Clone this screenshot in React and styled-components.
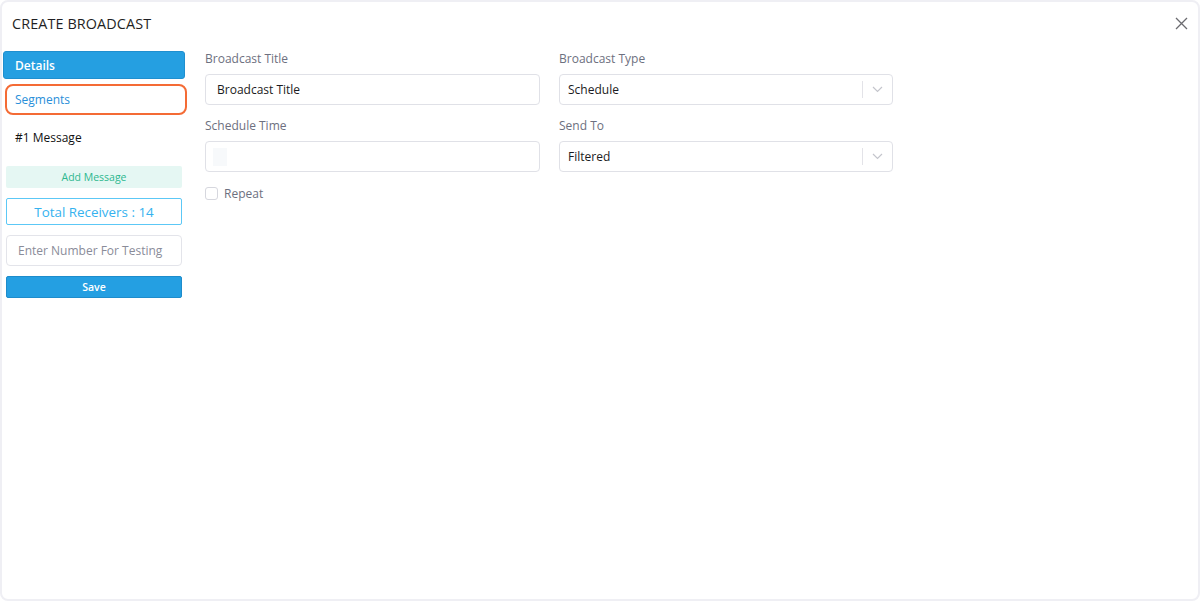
import React from "react";
import styled, { createGlobalStyle } from "styled-components";

const GlobalStyle = createGlobalStyle`
  html, body {
    margin: 0;
    padding: 0;
    background: #ffffff;
  }
  body {
    font-family: "Open Sans", "Noto Sans", sans-serif;
  }
  * {
    box-sizing: border-box;
  }
`;

const Card = styled.div`
  width: 1200px;
  height: 601px;
  border: 2px solid #efeff4;
  border-radius: 8px;
  background: #ffffff;
  display: flex;
  flex-direction: column;
`;

const Header = styled.div`
  display: flex;
  align-items: center;
  justify-content: space-between;
  height: 42px;
  padding: 0 7px 0 10px;
`;

const Title = styled.h1`
  margin: 0;
  font-family: "Open Sans", sans-serif;
  font-weight: 400;
  font-size: 14.4px;
  color: #1f1f24;
  letter-spacing: 0.1px;
`;

const CloseButton = styled.button`
  border: none;
  background: none;
  padding: 0;
  width: 20px;
  height: 20px;
  display: flex;
  align-items: center;
  justify-content: center;
  cursor: pointer;
`;

const Body = styled.div`
  display: flex;
  gap: 20px;
  padding: 7px 0 0 1px;
`;

const Sidebar = styled.div`
  width: 182px;
  display: flex;
  flex-direction: column;
`;

const NavItem = styled.div`
  height: ${(p) => (p.$outlined ? "31px" : "28px")};
  margin: ${(p) => (p.$outlined ? "5px -2px 0 2px" : "0")};
  display: flex;
  align-items: center;
  padding-left: ${(p) => (p.$outlined ? "8px" : "11px")};
  font-size: 12px;
  font-weight: ${(p) => (p.$active ? 600 : 400)};
  color: ${(p) => (p.$active ? "#ffffff" : p.$outlined ? "#2a8fd9" : "#111111")};
  background: ${(p) => (p.$active ? "#259fe1" : "transparent")};
  border: ${(p) => (p.$outlined ? "2px solid #f46b35" : p.$active ? "1px solid #1f8fcf" : "none")};
  border-radius: ${(p) => (p.$outlined ? "8px" : "3px")};
`;

const MessageItem = styled.div`
  height: 38px;
  display: flex;
  align-items: center;
  padding-left: 12px;
  margin-top: 3px;
  font-size: 12px;
  color: #111111;
`;

const Actions = styled.div`
  display: flex;
  flex-direction: column;
  gap: 10px;
  padding: 10px 3px 0 3px;
`;

const AddMessage = styled.button`
  height: 22px;
  border: none;
  border-radius: 2px;
  background: #e5f7f3;
  color: #2db88f;
  font-family: inherit;
  font-size: 10.5px;
  font-weight: 500;
  cursor: pointer;
`;

const Receivers = styled.div`
  height: 27px;
  border: 1px solid #5cc8f6;
  border-radius: 2px;
  display: flex;
  align-items: center;
  justify-content: center;
  color: #35b2ef;
  font-size: 13.4px;
`;

const TestInput = styled.input`
  height: 31px;
  border: 1px solid #e3e4ea;
  border-radius: 4px;
  padding: 0 11px;
  font-family: inherit;
  font-size: 12px;
  color: #333;
  outline: none;
  &::placeholder {
    color: #8a8c99;
  }
`;

const SaveButton = styled.button`
  height: 22px;
  border: 1px solid #1e8ccb;
  border-radius: 2px;
  background: #249fe2;
  color: #ffffff;
  font-family: inherit;
  font-size: 10.5px;
  font-weight: 600;
  cursor: pointer;
`;

const Form = styled.div`
  display: grid;
  grid-template-columns: 335px 334px;
  column-gap: 19px;
  align-content: start;
`;

const Field = styled.div`
  display: flex;
  flex-direction: column;
  margin-bottom: 13px;
`;

const Label = styled.label`
  font-size: 12px;
  color: #6d7080;
  height: 16px;
  line-height: 16px;
  margin-bottom: 7px;
`;

const TextBox = styled.div`
  height: 31px;
  border: 1px solid #e0e1e7;
  border-radius: 4px;
  display: flex;
  align-items: center;
  padding: 0 11px;
  font-size: 12px;
  color: #1b1b22;
`;

const Ghost = styled.span`
  width: 14px;
  height: 18px;
  margin-left: -4px;
  background: #f7f9fb;
`;

const SelectBox = styled.div`
  height: 31px;
  border: 1px solid #e0e1e7;
  border-radius: 4px;
  display: flex;
  align-items: center;
  padding-left: 8px;
  font-size: 12px;
  color: #1b1b22;
`;

const SelectValue = styled.span`
  flex: 1;
`;

const Separator = styled.span`
  width: 1px;
  height: 17px;
  background: #e3e3e8;
`;

const Chevron = styled.span`
  width: 29px;
  display: flex;
  align-items: center;
  justify-content: center;
`;

const CheckRow = styled.label`
  grid-column: 1 / 2;
  display: flex;
  align-items: center;
  gap: 6px;
  font-size: 12px;
  color: #6d7080;
  margin-top: 0;
`;

const Box = styled.span`
  width: 13px;
  height: 13px;
  border: 1px solid #d6d7de;
  border-radius: 3px;
  background: #fff;
`;

function ChevronIcon() {
  return (
    <svg width="11" height="7" viewBox="0 0 11 7" fill="none">
      <path d="M1 1l4.5 4.5L10 1" stroke="#c4c5cc" strokeWidth="1.2" />
    </svg>
  );
}

function Select({ value }) {
  return (
    <SelectBox>
      <SelectValue>{value}</SelectValue>
      <Separator />
      <Chevron>
        <ChevronIcon />
      </Chevron>
    </SelectBox>
  );
}

export default function App() {
  return (
    <>
      <GlobalStyle />
      <Card>
        <Header>
          <Title>CREATE BROADCAST</Title>
          <CloseButton aria-label="Close">
            <svg width="13" height="13" viewBox="0 0 13 13">
              <path d="M1 1l11 11M12 1L1 12" stroke="#6b6b70" strokeWidth="1.3" />
            </svg>
          </CloseButton>
        </Header>
        <Body>
          <Sidebar>
            <NavItem $active>Details</NavItem>
            <NavItem $outlined>Segments</NavItem>
            <MessageItem>#1 Message</MessageItem>
            <Actions>
              <AddMessage>Add Message</AddMessage>
              <Receivers>Total Receivers : 14</Receivers>
              <TestInput placeholder="Enter Number For Testing" />
              <SaveButton>Save</SaveButton>
            </Actions>
          </Sidebar>
          <Form>
            <Field>
              <Label>Broadcast Title</Label>
              <TextBox>Broadcast Title</TextBox>
            </Field>
            <Field>
              <Label>Broadcast Type</Label>
              <Select value="Schedule" />
            </Field>
            <Field>
              <Label>Schedule Time</Label>
              <TextBox>
                <Ghost />
              </TextBox>
            </Field>
            <Field>
              <Label>Send To</Label>
              <Select value="Filtered" />
            </Field>
            <CheckRow>
              <Box />
              Repeat
            </CheckRow>
          </Form>
        </Body>
      </Card>
    </>
  );
}
